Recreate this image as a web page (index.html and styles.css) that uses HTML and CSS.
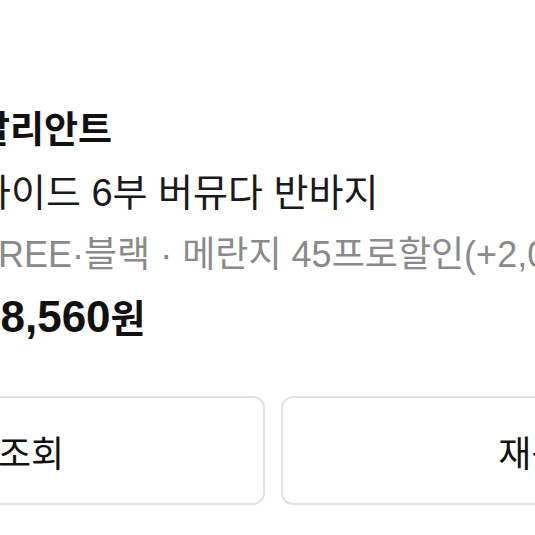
FILE: index.html
```html
<!DOCTYPE html>
<html lang="ko">
<head>
    <meta charset="UTF-8">
    <meta name="viewport" content="width=device-width, initial-scale=1.0">
    <title>주문내역</title>
    <link rel="stylesheet" href="styles.css">
</head>
<body>
    <div class="screen">
        <div class="order-item">
            <div class="thumb"></div>
            <div class="info">
                <p class="brand">칼리안트</p>
                <p class="name">와이드 6부 버뮤다 반바지</p>
                <p class="option">FREE·블랙 · 메란지 45프로할인(+2,000원) / 1개</p>
                <p class="price">18,560<span class="unit">원</span></p>
            </div>
        </div>

        <div class="actions">
            <button class="action-btn">배송조회</button>
            <button class="action-btn">재구매</button>
        </div>
    </div>
</body>
</html>
```

FILE: styles.css
```css
html, body {
    overflow: hidden;
}

body {
    margin: 0;
    background: #ffffff;
    font-family: "Liberation Sans", "Noto Sans CJK KR", sans-serif;
    color: #111111;
}

.screen {
    box-sizing: border-box;
    width: 1132px;
    margin-left: -293px;
    padding: 109px 24px 0;
}

/* order item */
.order-item {
    display: flex;
    gap: 24px;
}

.thumb {
    flex-shrink: 0;
    width: 221px;
    height: 221px;
    background: #f2f2f2;
    border-radius: 8px;
}

.info {
    display: flex;
    flex-direction: column;
    gap: 18px;
    min-width: 0;
}

.info p {
    margin: 0;
    line-height: 44px;
    white-space: nowrap;
}

.brand {
    font-size: 37px;
    font-weight: 700;
}

.name {
    font-size: 38px;
    color: #1a1a1a;
}

.option {
    font-size: 36px;
    color: #8a8a8a;
}

.price {
    font-size: 44px;
    font-weight: 700;
}

.price .unit {
    font-size: 38px;
}

/* buttons */
.actions {
    display: grid;
    grid-template-columns: 1fr 1fr;
    gap: 16px;
    margin-top: 55px;
}

.action-btn {
    height: 109px;
    border: 2px solid #e2e2e2;
    border-radius: 12px;
    background: #ffffff;
    font-family: inherit;
    font-size: 36px;
    color: #111111;
}
```
